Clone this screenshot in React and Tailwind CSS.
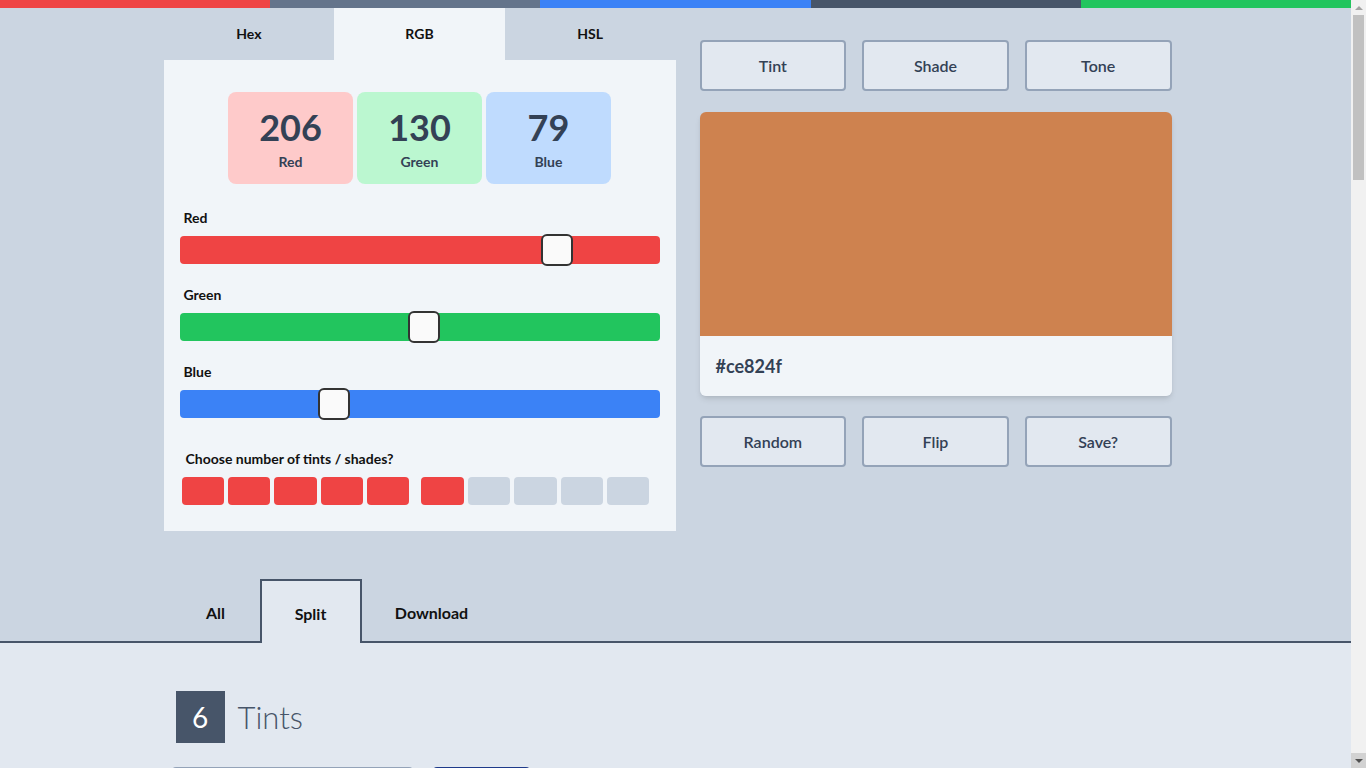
import { useState } from 'react'

const base = [206, 130, 79]

function mix(rgb, target, t) {
  const c = rgb.map((v, i) => Math.round(v + (target[i] - v) * t))
  return '#' + c.map((v) => v.toString(16).padStart(2, '0')).join('')
}

function Slider({ label, value, track }) {
  // thumb is 32px, travel is track width minus thumb
  const left = `calc(${(value / 255) * 100}% - ${(value / 255) * 32}px)`
  return (
    <div>
      <div className="pl-1 text-sm font-bold text-[#111]">{label}</div>
      <div className={`relative mt-2 h-7 rounded ${track}`}>
        <div
          className="absolute top-1/2 h-8 w-8 -translate-y-1/2 rounded-md border-2 border-[#333] bg-[#fafafa]"
          style={{ left }}
        />
      </div>
    </div>
  )
}

function ActionButton({ children }) {
  return (
    <button className="h-[51px] rounded border-2 border-[#94a3b8] bg-[#e2e8f0] text-base font-semibold text-[#334155]">
      {children}
    </button>
  )
}

function ColorRow({ color }) {
  return (
    <div className="flex items-start gap-5">
      <div className="h-[190px] w-[241px] rounded border-2 border-[#94a3b8]" style={{ background: color }} />
      <div className="flex flex-col gap-2">
        <button className="h-10 w-[97px] rounded bg-[#1e3a8a] text-sm font-semibold text-white">Copy</button>
        <span className="text-base font-semibold text-[#334155]">{color}</span>
      </div>
    </div>
  )
}

function Section({ count, title, colors }) {
  return (
    <div>
      <div className="flex items-center gap-[13px] pl-[12px]">
        <div className="flex h-[52px] w-[49px] items-center justify-center bg-[#475569] text-[28px] text-white">{count}</div>
        <div className="text-[31px] font-light text-[#475569]">{title}</div>
      </div>
      <div className="mt-6 flex flex-col gap-4 pl-2">
        {colors.map((c) => (
          <ColorRow key={c} color={c} />
        ))}
      </div>
    </div>
  )
}

function Scrollbar() {
  return (
    <div className="flex w-[15px] flex-col bg-[#f1f1f1]">
      <div className="flex h-[15px] items-center justify-center">
        <div className="h-0 w-0 border-x-4 border-b-4 border-x-transparent border-b-[#a3a3a3]" />
      </div>
      <div className="mx-[2px] h-[165px] bg-[#c1c1c1]" />
      <div className="flex-1" />
      <div className="flex h-[15px] items-center justify-center bg-[#d2d2d2]">
        <div className="h-0 w-0 border-x-4 border-t-4 border-x-transparent border-t-[#505050]" />
      </div>
    </div>
  )
}

const views = [
  ['All', 'w-[88px]'],
  ['Split', 'w-[102px]'],
  ['Download', 'w-[140px]'],
]

export default function App() {
  const [tab, setTab] = useState('RGB')
  const [view, setView] = useState('Split')
  const selected = 6

  const tints = [1, 2, 3, 4, 5, 6].map((i) => mix(base, [255, 255, 255], i / 7))
  const shades = [1, 2, 3, 4, 5, 6].map((i) => mix(base, [0, 0, 0], i / 7))

  return (
    <div className="flex h-screen font-['Lato',sans-serif] text-[#334155]">
      <main className="flex-1 overflow-y-auto bg-[#cbd5e1] [scrollbar-width:none]">
        <div className="flex h-2">
          <div className="flex-1 bg-[#ef4444]" />
          <div className="flex-1 bg-[#64748b]" />
          <div className="flex-1 bg-[#3b82f6]" />
          <div className="flex-1 bg-[#475569]" />
          <div className="flex-1 bg-[#22c55e]" />
        </div>

        <div className="mx-auto flex w-[1024px]">
          <div className="w-[512px]">
            <div className="grid h-[52px] grid-cols-3">
              {['Hex', 'RGB', 'HSL'].map((t) => (
                <button
                  key={t}
                  onClick={() => setTab(t)}
                  className={`text-sm font-bold text-[#111] ${tab === t ? 'bg-[#f1f5f9]' : 'bg-[#cbd5e1]'}`}
                >
                  {t}
                </button>
              ))}
            </div>
            <div className="bg-[#f1f5f9] px-4 pb-[26px] pt-8">
              <div className="flex justify-center gap-1">
                {[
                  ['206', 'Red', 'bg-[#fecaca]'],
                  ['130', 'Green', 'bg-[#bbf7d0]'],
                  ['79', 'Blue', 'bg-[#bfdbfe]'],
                ].map(([n, l, bg]) => (
                  <div key={l} className={`flex h-[92px] w-[125px] flex-col items-center justify-center rounded-lg pt-[3px] ${bg}`}>
                    <span className="text-4xl font-bold leading-10 text-[#334155]">{n}</span>
                    <span className="mt-[5px] text-sm font-bold leading-5 text-[#334155]">{l}</span>
                  </div>
                ))}
              </div>

              <div className="mt-6 flex flex-col gap-[21px]">
                <Slider label="Red" value={206} track="bg-[#ef4444]" />
                <Slider label="Green" value={130} track="bg-[#22c55e]" />
                <Slider label="Blue" value={79} track="bg-[#3b82f6]" />
              </div>

              <div className="mt-[31px] pl-[6px] text-sm font-bold text-[#111]">Choose number of tints / shades?</div>
              <div className="mt-2 flex gap-3 pl-[2px]">
                {[0, 5].map((start) => (
                  <div key={start} className="flex gap-1">
                    {[1, 2, 3, 4, 5].map((i) => (
                      <div
                        key={i}
                        className={`h-7 w-[42.4px] rounded ${start + i <= selected ? 'bg-[#ef4444]' : 'bg-[#cbd5e1]'}`}
                      />
                    ))}
                  </div>
                ))}
              </div>
            </div>
          </div>

          <div className="ml-6 w-[472px] pt-8">
            <div className="grid grid-cols-3 gap-4">
              <ActionButton>Tint</ActionButton>
              <ActionButton>Shade</ActionButton>
              <ActionButton>Tone</ActionButton>
            </div>
            <div className="mt-[21px] overflow-hidden rounded-md shadow-md">
              <div className="h-[224px] bg-[#ce824f]" />
              <div className="flex h-[60px] items-center bg-[#f1f5f9] px-4 text-lg font-bold text-[#334155]">#ce824f</div>
            </div>
            <div className="mt-5 grid grid-cols-3 gap-4">
              <ActionButton>Random</ActionButton>
              <ActionButton>Flip</ActionButton>
              <ActionButton>Save?</ActionButton>
            </div>
          </div>
        </div>

        <div className="mt-12 border-b-2 border-[#475569]">
          <div className="mx-auto flex w-[1024px] items-end pl-2">
            {views.map(([v, w]) =>
              view === v ? (
                <button
                  key={v}
                  onClick={() => setView(v)}
                  className={`-mb-[2px] h-[64px] border-2 border-b-0 border-[#475569] bg-[#e2e8f0] pt-1 text-base font-bold text-[#111] ${w}`}
                >
                  {v}
                </button>
              ) : (
                <button key={v} onClick={() => setView(v)} className={`h-[62px] pt-[6px] text-base font-bold text-[#111] ${w}`}>
                  {v}
                </button>
              )
            )}
          </div>
        </div>

        <div className="bg-[#e2e8f0] pb-12 pt-12">
          <div className="mx-auto flex w-[1024px] flex-col gap-12">
            <Section count={6} title="Tints" colors={tints} />
            <Section count={6} title="Shades" colors={shades} />
          </div>
        </div>
      </main>
      <Scrollbar />
    </div>
  )
}
